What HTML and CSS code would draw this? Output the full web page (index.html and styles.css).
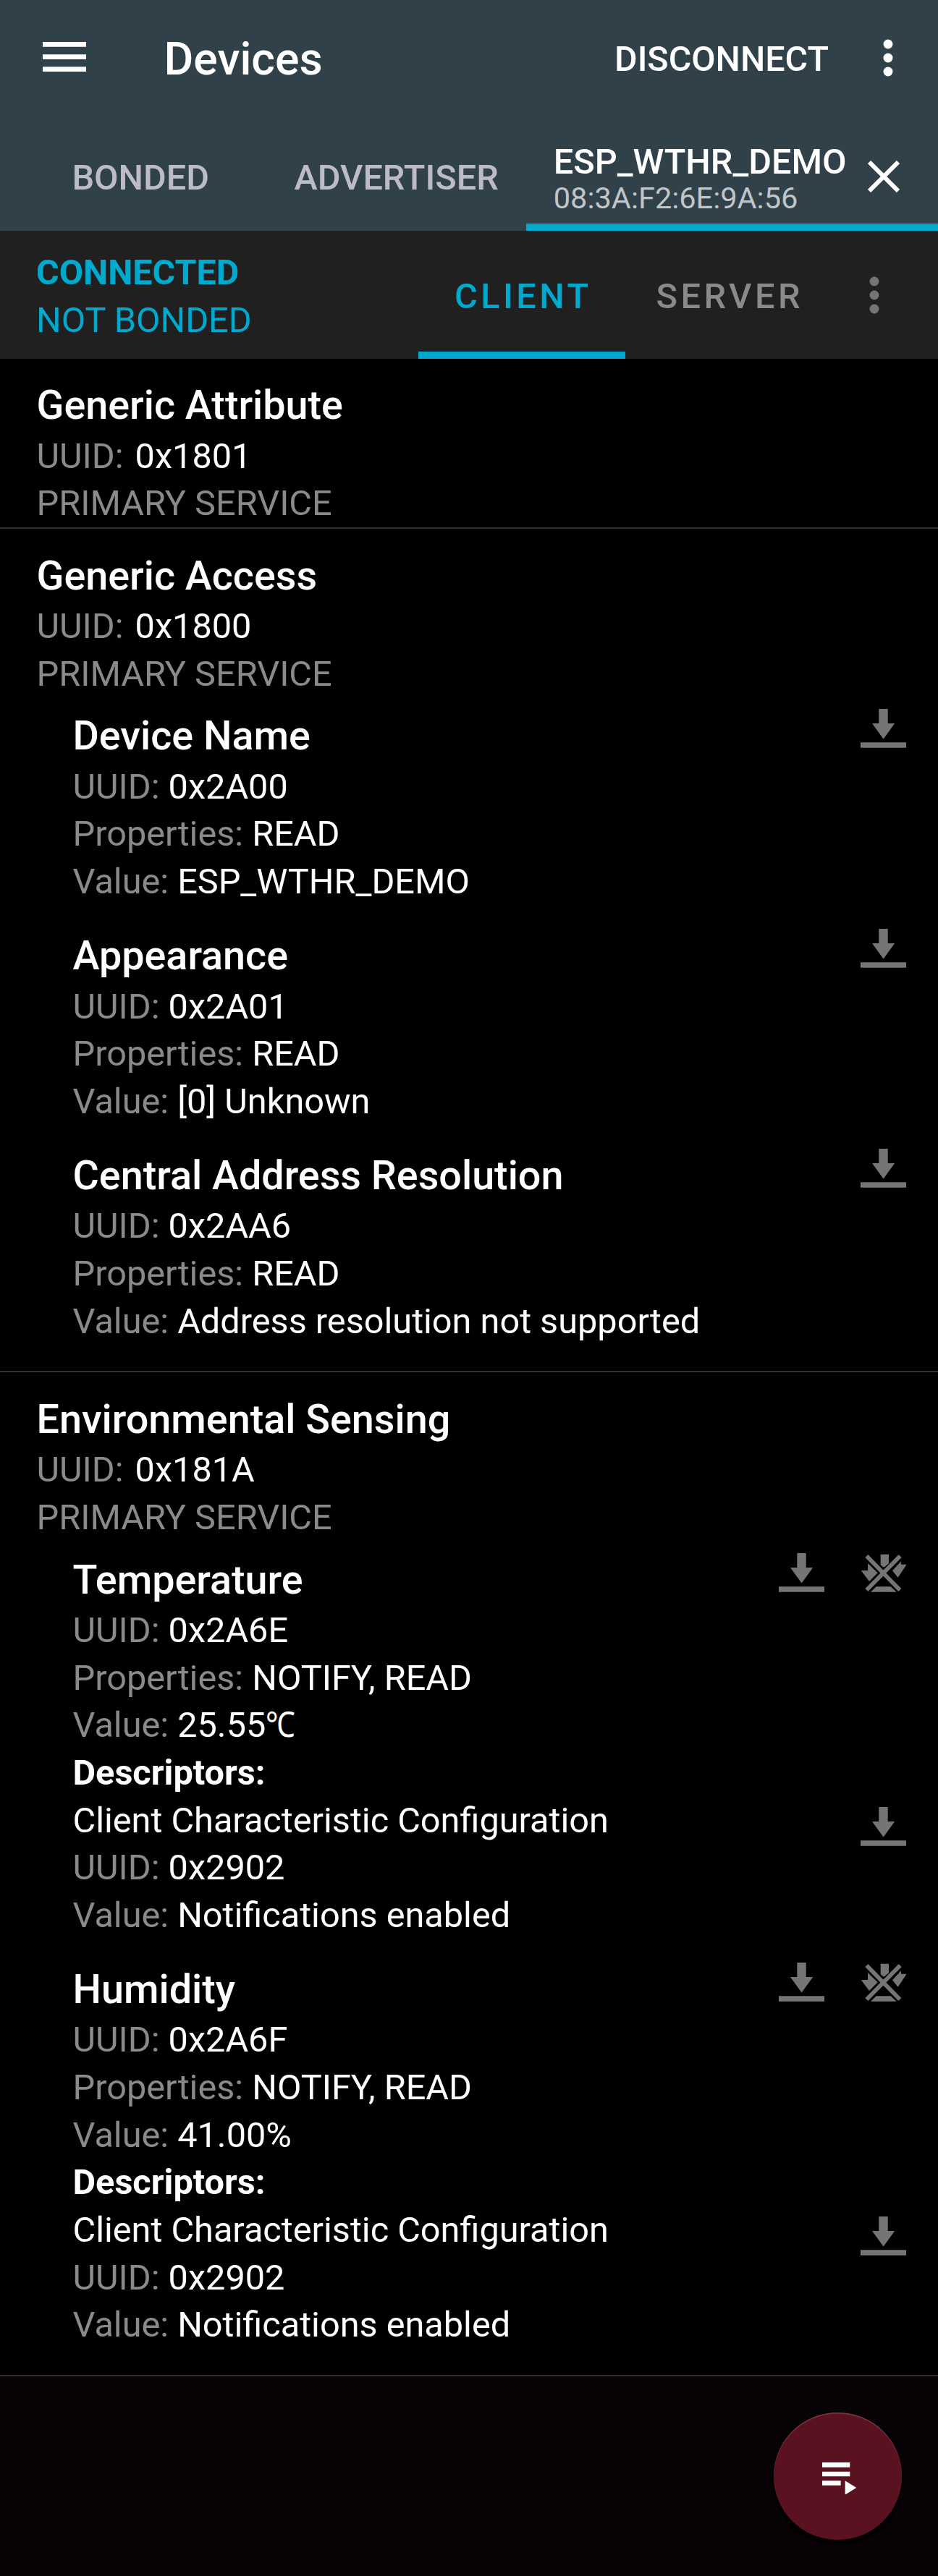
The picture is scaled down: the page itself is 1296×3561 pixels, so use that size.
FILE: index.html
```html
<!DOCTYPE html>
<html lang="en">
<head>
<meta charset="utf-8">
<title>Devices</title>
<link rel="stylesheet" href="styles.css">
</head>
<body>
<svg width="0" height="0" class="defs" aria-hidden="true">
  <symbol id="read" viewBox="0 0 63 54">
    <path d="M25.3 0h12.4v20h9.5L31.6 41.6 16 20h9.3zM0 46.3h63v7.4H0z"/>
  </symbol>
  <symbol id="notify-off" viewBox="0 0 189 162">
    <path d="M83 5h34v38l-18 15h-6L83 48zM2 72h28V42l41 40-35 35zM168 34v13h23l-36 54-23-28zM42 161l23-22h60l24 22z"/>
    <path d="M25 12l138 141M164 12L25 153" fill="none" stroke="currentColor" stroke-width="17"/>
  </symbol>
  <symbol id="more" viewBox="0 0 14 52">
    <circle cx="7" cy="7" r="6.5"/><circle cx="7" cy="26" r="6.5"/><circle cx="7" cy="45" r="6.5"/>
  </symbol>
</svg>

<header class="app-header">
  <div class="toolbar">
    <svg class="menu-icon" viewBox="0 0 60 41"><path d="M0 0h60v6.7H0zM0 17.2h60v6.7H0zM0 34.3h60V41H0z"/></svg>
    <h1 class="app-title">Devices</h1>
    <span class="action">DISCONNECT</span>
    <svg class="more-icon"><use href="#more"/></svg>
  </div>
  <nav class="tabs">
    <div class="tab tab-bonded">BONDED</div>
    <div class="tab tab-advertiser">ADVERTISER</div>
    <div class="tab tab-device">
      <div>
        <div class="device-name">ESP_WTHR_DEMO</div>
        <div class="device-address">08:3A:F2:6E:9A:56</div>
      </div>
      <svg class="close-icon" viewBox="0 0 44 44"><path d="M2 2l40 40M42 2L2 42" fill="none" stroke="currentColor" stroke-width="6"/></svg>
    </div>
  </nav>
</header>

<section class="status-bar">
  <div class="status">
    <div class="connected">CONNECTED</div>
    <div>NOT BONDED</div>
  </div>
  <div class="mode mode-client">CLIENT</div>
  <div class="mode mode-server">SERVER</div>
  <svg class="more-icon more-muted"><use href="#more"/></svg>
</section>

<main>
  <section class="service">
    <h2>Generic Attribute</h2>
    <p class="service-uuid"><span>UUID:</span> 0x1801</p>
    <p><span>PRIMARY SERVICE</span></p>
  </section>

  <section class="service">
    <h2>Generic Access</h2>
    <p class="service-uuid"><span>UUID:</span> 0x1800</p>
    <p><span>PRIMARY SERVICE</span></p>
    <div class="characteristics">
      <article class="characteristic">
        <div class="row"><h3>Device Name</h3><svg class="icon"><use href="#read"/></svg></div>
        <p><span>UUID:</span> 0x2A00</p>
        <p><span>Properties:</span> READ</p>
        <p><span>Value:</span> ESP_WTHR_DEMO</p>
      </article>
      <article class="characteristic">
        <div class="row"><h3>Appearance</h3><svg class="icon"><use href="#read"/></svg></div>
        <p><span>UUID:</span> 0x2A01</p>
        <p><span>Properties:</span> READ</p>
        <p><span>Value:</span> [0] Unknown</p>
      </article>
      <article class="characteristic">
        <div class="row"><h3>Central Address Resolution</h3><svg class="icon"><use href="#read"/></svg></div>
        <p><span>UUID:</span> 0x2AA6</p>
        <p><span>Properties:</span> READ</p>
        <p><span>Value:</span> Address resolution not supported</p>
      </article>
    </div>
  </section>

  <section class="service">
    <h2>Environmental Sensing</h2>
    <p class="service-uuid"><span>UUID:</span> 0x181A</p>
    <p><span>PRIMARY SERVICE</span></p>
    <div class="characteristics">
      <article class="characteristic">
        <div class="row"><h3>Temperature</h3><svg class="icon"><use href="#read"/></svg><svg class="icon"><use href="#notify-off"/></svg></div>
        <p><span>UUID:</span> 0x2A6E</p>
        <p><span>Properties:</span> NOTIFY, READ</p>
        <p><span>Value:</span> 25.55<b class="unit">℃</b></p>
        <h4>Descriptors:</h4>
        <div class="row descriptor"><p>Client Characteristic Configuration</p><svg class="icon"><use href="#read"/></svg></div>
        <p><span>UUID:</span> 0x2902</p>
        <p><span>Value:</span> Notifications enabled</p>
      </article>
      <article class="characteristic">
        <div class="row"><h3>Humidity</h3><svg class="icon"><use href="#read"/></svg><svg class="icon"><use href="#notify-off"/></svg></div>
        <p><span>UUID:</span> 0x2A6F</p>
        <p><span>Properties:</span> NOTIFY, READ</p>
        <p><span>Value:</span> 41.00%</p>
        <h4>Descriptors:</h4>
        <div class="row descriptor"><p>Client Characteristic Configuration</p><svg class="icon"><use href="#read"/></svg></div>
        <p><span>UUID:</span> 0x2902</p>
        <p><span>Value:</span> Notifications enabled</p>
      </article>
    </div>
  </section>
</main>

<footer class="bottom">
  <div class="fab">
    <svg class="fab-icon" viewBox="0 0 142 134"><path d="M0 0h115v20H0zM0 38h115v20H0zM0 76h77v19H0zM95 76l47 29-47 29z"/></svg>
  </div>
</footer>
</body>
</html>
```
FILE: styles.css
```css
* { box-sizing: border-box; }

body {
  margin: 0;
  min-height: 3561px;
  display: flex;
  flex-direction: column;
  background: #000;
  color: #fff;
  font: 400 48.65px/65.65px Roboto, sans-serif;
}

h1, h2, h3, h4, p { margin: 0; }
svg { display: block; flex: none; fill: currentColor; }
.defs { position: absolute; }

.app-header {
  height: 319px;
  background: #31414a;
  font-weight: 500;
}

.toolbar {
  height: 164px;
  padding-right: 62.5px;
  display: flex;
  align-items: center;
}
.menu-icon { width: 60px; height: 41px; margin: 0 0 7px 58.5px; }
.app-title { margin-left: 108px; font-size: 62.5px; font-weight: 500; }
.action { margin-left: auto; font-size: 48.4px; }
.more-icon { width: 14px; height: 52px; margin: 0 0 4px 74.5px; }

.tabs { display: flex; height: 155px; }
.tab {
  display: flex;
  align-items: center;
  padding-top: 9px;
  color: #bdbcc6;
}
.tab-bonded { width: 368px; padding-left: 99.4px; }
.tab-advertiser { width: 359px; padding-left: 38.5px; }
.tab-device {
  flex: 1;
  padding: 16px 53px 0 37.8px;
  justify-content: space-between;
  border-bottom: 10px solid #00a9ce;
  color: #fff;
}
.device-name { line-height: 57px; }
.device-address { font-size: 41.5px; line-height: 43px; font-weight: 400; color: #c1c6c9; }
.close-icon { width: 44px; height: 44px; margin-bottom: 2px; }

.status-bar {
  height: 177px;
  display: flex;
  background: #202020;
  color: #00a9ce;
}
.status { width: 578px; padding: 25px 0 0 50px; }
.connected { font-weight: 700; font-size: 48.4px; }
.mode {
  display: flex;
  align-items: center;
  letter-spacing: 4.5px;
  font-weight: 500;
  padding-top: 4px;
}
.mode-client { width: 286px; padding: 14px 0 0 50px; border-bottom: 10px solid #00a9ce; }
.mode-server { padding-left: 42.5px; color: #8b8a8b; }
.more-muted { align-self: center; margin: 0 81.2px 0 auto; color: #757673; }

.service {
  padding: 27.4px 43.7px 0 50.5px;
  border-bottom: 2px solid #2e2f2f;
}
.service h2, .service h3 {
  font-size: 55.7px;
  line-height: 74.4px;
  font-weight: 500;
}
.service p span { color: #8b8a8b; }
.service-uuid { word-spacing: 4px; }
.service h4 { font-size: inherit; line-height: inherit; font-weight: 700; }

.characteristics { padding: 16.2px 0 3.5px 50px; }
.characteristic { padding-bottom: 32.4px; }

.row { display: flex; gap: 50.5px; align-items: flex-start; }
.row > :first-child { flex: 1; white-space: nowrap; }
.icon { width: 63px; height: 54px; color: #757673; overflow: visible; }
.descriptor .icon { margin-top: 14px; margin-bottom: -14px; }

.unit {
  display: inline-block;
  font-weight: 400;
  transform: scaleX(0.84);
  transform-origin: left;
}

.bottom {
  flex: 1;
  display: flex;
  justify-content: flex-end;
  align-items: flex-start;
  padding: 49.8px 50.3px 0 0;
  background: #080306;
}
.fab {
  width: 176.4px;
  height: 176.4px;
  border-radius: 50%;
  background: #5a1120;
  box-shadow: inset 0 1.5px 1px #7a3a46, 0 7px 6px #000;
  padding: 69px 0 0 67px;
}
.fab-icon { width: 47.3px; height: 44.7px; }
```
